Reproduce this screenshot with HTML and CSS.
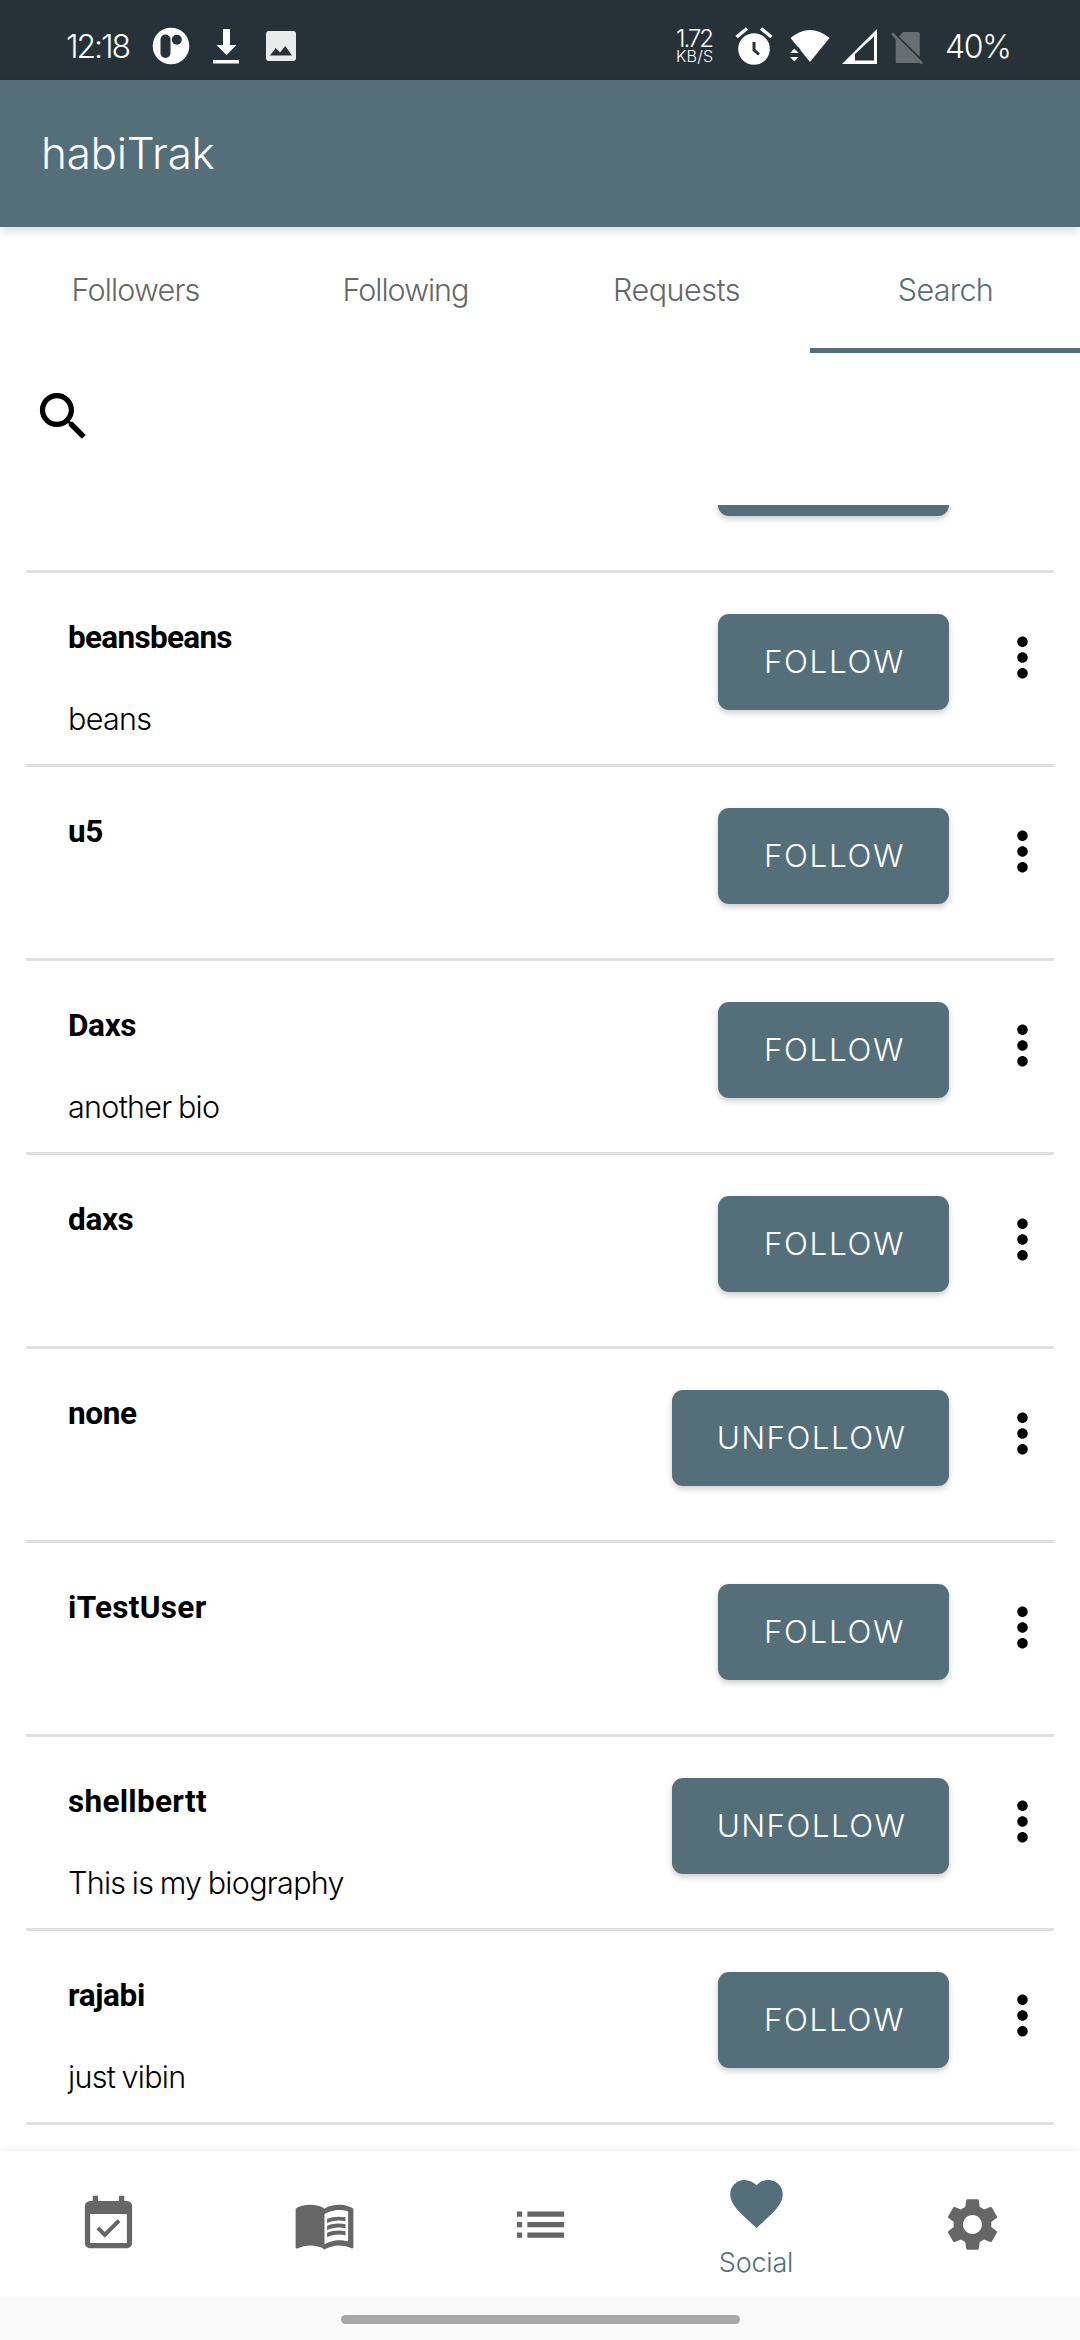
FILE: index.html
```html
<!DOCTYPE html>
<html lang="en">
<head>
<meta charset="utf-8">
<title>habiTrak</title>
<link rel="stylesheet" href="styles.css">
</head>
<body>
<svg class="defs" width="0" height="0">
  <symbol id="more" viewBox="0 0 24 24"><path d="M12 8c1.1 0 2-.9 2-2s-.9-2-2-2-2 .9-2 2 .9 2 2 2zm0 2c-1.1 0-2 .9-2 2s.9 2 2 2 2-.9 2-2-.9-2-2-2zm0 6c-1.1 0-2 .9-2 2s.9 2 2 2 2-.9 2-2-.9-2-2-2z"/></symbol>
</svg>
<div class="screen">
  <div class="status">
    <span class="clock">12:18</span>
    <svg class="s-app" viewBox="0 0 38 38"><circle cx="19" cy="19" r="18.3" fill="#fff"/><rect x="8.500" y="7.500" width="10" height="23.500" rx="5" fill="#263238"/><circle cx="24.800" cy="12.800" r="5" fill="#263238"/></svg>
    <svg class="s-down" viewBox="0 0 26 35"><path d="M10 0h7v16h6.500L13.500 26 3.500 16H10zM0 31h26v3.500H0z" fill="#fff"/></svg>
    <svg class="s-img" viewBox="0 0 30 30"><path fill-rule="evenodd" d="M3 0h24a3 3 0 0 1 3 3v24a3 3 0 0 1-3 3H3a3 3 0 0 1-3-3V3a3 3 0 0 1 3-3zM4 24.500h22L19.300 15l-5.300 6.500-4.300-4.500z" fill="#e9ebeb"/></svg>
    <div class="speed"><span class="rate">1.72</span><span class="unit">KB/S</span></div>
    <svg class="s-alarm" viewBox="0 0 38 38"><circle cx="19" cy="22" r="15.800" fill="#fff"/><path d="M1.500 10L12 1.500M36.500 10L26 1.500" stroke="#fff" stroke-width="3.500"/><path d="M19 15v8l5 4.500" stroke="#263238" stroke-width="3" fill="none"/></svg>
    <svg class="s-wifi" viewBox="0 0 40 34"><path d="M.5 8Q20-8 39.500 8L20 32z" fill="#fff"/><path d="M-1 17h9.500l2 3v12H-1z" fill="#263238"/><path d="M0 23l4.300-4.500 4.300 4.500zM0 27l4.300 4.500 4.300-4.500z" fill="#fff"/></svg>
    <svg class="s-signal" viewBox="0 0 36 36"><path fill-rule="evenodd" d="M0 35L35 0v35zM13 31.500h19V7.500L13 25z" fill="#fff"/></svg>
    <svg class="s-sim" viewBox="0 0 32 34"><path d="M12 1h15q1.700 0 1.700 1.700v23L8 5.500zM4.700 7l24 25h-24z" fill="#676f73"/><path d="M1 2.500l30 30" stroke="#676f73" stroke-width="2.600"/></svg>
    <span class="battery">40%</span>
  </div>
  <header class="appbar"><h1 class="title">habiTrak</h1></header>
  <nav class="tabs">
    <div class="tab"><span class="t-followers">Followers</span></div>
    <div class="tab"><span class="t-following">Following</span></div>
    <div class="tab"><span class="t-requests">Requests</span></div>
    <div class="tab selected"><span class="t-search">Search</span></div>
  </nav>
  <div class="search"><svg class="icon" viewBox="0 0 24 24"><path d="M15.5 14h-.79l-.28-.27C15.41 12.59 16 11.110 16 9.500 16 5.910 13.090 3 9.500 3S3 5.910 3 9.500 5.910 16 9.500 16c1.610 0 3.090-.59 4.230-1.570l.27.28v.79l5 4.990L20.490 19l-4.990-5zm-6 0C7.010 14 5 11.990 5 9.500S7.010 5 9.500 5 14 7.010 14 9.500 11.990 14 9.500 14z"/></svg></div>
  <main class="list">
    <div class="row scrolled"><div class="user"></div><div class="btn follow"></div><div class="more"></div></div>
    <div class="row"><div class="user"><b class="name tight">beansbeans</b><span class="bio">beans</span></div><div class="btn follow">FOLLOW</div><svg class="icon more"><use href="#more"/></svg></div>
    <div class="row"><div class="user"><b class="name">u5</b></div><div class="btn follow">FOLLOW</div><svg class="icon more"><use href="#more"/></svg></div>
    <div class="row"><div class="user"><b class="name">Daxs</b><span class="bio">another bio</span></div><div class="btn follow">FOLLOW</div><svg class="icon more"><use href="#more"/></svg></div>
    <div class="row"><div class="user"><b class="name">daxs</b></div><div class="btn follow">FOLLOW</div><svg class="icon more"><use href="#more"/></svg></div>
    <div class="row"><div class="user"><b class="name">none</b></div><div class="btn unfollow">UNFOLLOW</div><svg class="icon more"><use href="#more"/></svg></div>
    <div class="row"><div class="user"><b class="name loose">iTestUser</b></div><div class="btn follow">FOLLOW</div><svg class="icon more"><use href="#more"/></svg></div>
    <div class="row"><div class="user"><b class="name loose">shellbertt</b><span class="bio">This is my biography</span></div><div class="btn unfollow">UNFOLLOW</div><svg class="icon more"><use href="#more"/></svg></div>
    <div class="row"><div class="user"><b class="name">rajabi</b><span class="bio">just vibin</span></div><div class="btn follow">FOLLOW</div><svg class="icon more"><use href="#more"/></svg></div>
  </main>
  <nav class="bottom">
    <div class="item"><svg class="icon" viewBox="0 0 24 24"><path d="M16.530 11.060L15.470 10l-4.880 4.880-2.120-2.120-1.060 1.060L10.590 17l5.940-5.940zM19 3h-1V1h-2v2H8V1H6v2H5c-1.110 0-1.990.9-1.990 2L3 19c0 1.100.89 2 2 2h14c1.100 0 2-.9 2-2V5c0-1.100-.9-2-2-2zm0 16H5V8h14v11z"/></svg></div>
    <div class="item"><svg class="icon" viewBox="0 0 24 24"><path d="M21 5c-1.110-.35-2.330-.5-3.500-.5-1.950 0-4.050.4-5.500 1.500-1.450-1.100-3.550-1.500-5.500-1.500S2.450 4.900 1 6v14.650c0 .25.25.5.5.5.1 0 .15-.05.25-.05C3.100 20.450 5.050 20 6.500 20c1.950 0 4.050.4 5.500 1.500 1.350-.85 3.800-1.500 5.500-1.500 1.650 0 3.350.3 4.750 1.050.1.050.15.050.25.050.25 0 .5-.25.5-.5V6c-.6-.45-1.250-.75-2-1zm0 13.500c-1.100-.35-2.300-.5-3.500-.5-1.700 0-4.150.65-5.500 1.500V8c1.350-.85 3.800-1.500 5.500-1.500 1.200 0 2.400.15 3.500.5v11.500z"/><path d="M17.500 10.500c.88 0 1.730.09 2.500.26V9.240c-.79-.15-1.640-.24-2.500-.24-1.700 0-3.240.29-4.500.83v1.660c1.130-.64 2.700-.99 4.500-.99zM13 12.490v1.660c1.130-.64 2.700-.99 4.500-.99.88 0 1.730.09 2.500.26V11.900c-.79-.15-1.640-.24-2.500-.24-1.700 0-3.240.3-4.500.83zm4.500 1.840c-1.700 0-3.240.29-4.500.83v1.660c1.130-.64 2.700-.99 4.500-.99.88 0 1.730.09 2.500.26v-1.520c-.79-.16-1.640-.24-2.500-.24z"/></svg></div>
    <div class="item"><svg class="icon" viewBox="0 0 24 24"><path d="M3 13h2v-2H3v2zm0 4h2v-2H3v2zm0-8h2V7H3v2zm4 4h14v-2H7v2zm0 4h14v-2H7v2zM7 7v2h14V7H7z"/></svg></div>
    <div class="item active"><svg class="icon" viewBox="0 0 24 24"><path d="M12 21.350l-1.450-1.320C5.400 15.360 2 12.280 2 8.500 2 5.420 4.420 3 7.500 3c1.740 0 3.410.81 4.500 2.090C13.090 3.810 14.760 3 16.500 3 19.580 3 22 5.420 22 8.500c0 3.780-3.400 6.860-8.550 11.540L12 21.350z"/></svg><span class="label">Social</span></div>
    <div class="item"><svg class="icon" viewBox="0 0 24 24"><path d="M19.140 12.940c.04-.3.06-.61.06-.94 0-.32-.02-.64-.07-.94l2.030-1.580c.18-.14.23-.41.12-.61l-1.920-3.320c-.12-.22-.37-.29-.59-.22l-2.390.96c-.5-.38-1.030-.7-1.620-.94L14.400 2.810c-.04-.24-.24-.41-.48-.41h-3.840c-.24 0-.43.17-.47.41L9.250 5.350C8.660 5.590 8.120 5.920 7.630 6.290L5.240 5.330c-.22-.08-.47 0-.59.22L2.740 8.870c-.12.21-.08.47.12.61l2.030 1.580C4.840 11.360 4.800 11.690 4.800 12s.02.64.07.94l-2.030 1.580c-.18.14-.23.41-.12.61l1.920 3.320c.12.22.37.29.59.22l2.390-.96c.5.38 1.030.7 1.620.94l.36 2.540c.05.24.24.41.48.41h3.840c.24 0 .44-.17.47-.41l.36-2.540c.59-.24 1.130-.56 1.620-.94l2.390.96c.22.08.47 0 .59-.22l1.920-3.320c.12-.22.07-.47-.12-.61L19.140 12.940zM12 15.600c-1.980 0-3.600-1.620-3.600-3.600s1.620-3.600 3.600-3.600 3.600 1.620 3.600 3.600-1.620 3.600-3.600 3.600z"/></svg></div>
  </nav>
  <div class="gesture"><div class="pill"></div></div>
</div>
</body>
</html>
```
FILE: styles.css
```css
* { box-sizing: border-box; }
body { margin: 0; background: #fff; font-family: Inter, "Liberation Sans", sans-serif; font-weight: 300; color: #000; }
.defs { display: block; }
.screen { width: 1080px; height: 2340px; display: flex; flex-direction: column; overflow: hidden; }
.screen span, .screen b, .btn { white-space: nowrap; }
svg { flex: none; display: block; }
.icon { width: 63px; height: 63px; fill: currentColor; }

.status { height: 80px; flex: none; background: #263238; color: #fff; display: flex; align-items: flex-start; padding-left: 66px; }
.clock, .battery { font-size: 32px; line-height: 40px; margin-top: 27px; }
.clock { width: 86px; letter-spacing: -2.1px; }
.s-app { width: 38px; height: 38px; margin-top: 27px; }
.s-down { width: 26px; height: 35px; margin: 29px 0 0 23px; }
.s-img { width: 30px; height: 30px; margin: 31px 0 0 27px; }
.speed { display: flex; flex-direction: column; width: 59px; margin: 28px 0 0 380px; }
.rate { font-size: 24px; line-height: 21px; letter-spacing: -2px; }
.unit { font-size: 16px; line-height: 14px; letter-spacing: .2px; }
.s-alarm { width: 38px; height: 38px; margin-top: 27px; }
.s-wifi { width: 40px; height: 34px; margin: 30px 0 0 17px; }
.s-signal { width: 36px; height: 36px; margin: 29px 0 0 12px; }
.s-sim { width: 32px; height: 34px; margin: 31px 0 0 13px; }
.battery { margin-left: 22px; letter-spacing: -1.4px; }

.appbar { height: 147px; flex: none; background: #546e7a; color: #fff; display: flex; align-items: center; padding: 0 0 2px 41px; box-shadow: 0 4px 10px rgba(0,0,0,.14); }
.title { margin: 0; font-size: 44px; font-weight: 300; letter-spacing: -.25px; }
.tabs { height: 126px; flex: none; display: flex; color: #666; font-size: 30.500px; }
.tab { width: 270px; display: flex; align-items: center; justify-content: center; padding: 0 0 2px 1px; }
.t-followers { letter-spacing: -.8px; }
.t-following { letter-spacing: -1px; }
.t-requests { letter-spacing: -.5px; padding-left: 2px; }
.t-search { letter-spacing: -.7px; }
.selected { color: #546e7a; box-shadow: inset 0 -5px #546e7a; }
.search { height: 152px; flex: none; padding: 32px; }

.list { height: 1646px; flex: none; overflow: hidden; padding: 0 26px; }
.row { height: 194px; display: flex; align-items: flex-start; border-bottom: 3px solid #e0e0e0; }
.scrolled { margin-top: -126px; }
.user { flex: 1; display: flex; flex-direction: column; padding: 46px 0 0 42px; }
.name { font: 700 31.500px/37px Roboto, sans-serif; letter-spacing: -.35px; }
.tight { letter-spacing: -.7px; }
.loose { letter-spacing: .3px; }
.bio { font-size: 30.500px; line-height: 37px; margin-top: 44px; letter-spacing: -.7px; word-spacing: -1.500px; }
.btn { height: 96px; margin-top: 41px; padding: 0 0 2px 2px; border-radius: 11px; background: #546e7a; color: #fff; font-size: 31.500px; display: flex; align-items: center; justify-content: center; box-shadow: 0 3px 6px rgba(0,0,0,.2); }
.follow { width: 231px; letter-spacing: 1.600px; }
.unfollow { width: 277px; letter-spacing: 1.400px; }
.more { width: 63px; margin: 53px 0 0 42px; }

.bottom { height: 147px; flex: none; background: #fff; display: flex; color: #666; box-shadow: 0 0 10px rgba(0,0,0,.08); }
.item { width: 216px; display: flex; flex-direction: column; align-items: center; padding-top: 42px; }
.active { padding-top: 21px; color: #546e7a; }
.label { font-size: 27px; line-height: 32px; margin-top: 12px; letter-spacing: -.2px; }
.gesture { height: 42px; flex: none; background: #fafafa; display: flex; justify-content: center; padding-top: 17px; }
.pill { width: 399px; height: 9px; border-radius: 5px; background: #a7a7a7; }
```
